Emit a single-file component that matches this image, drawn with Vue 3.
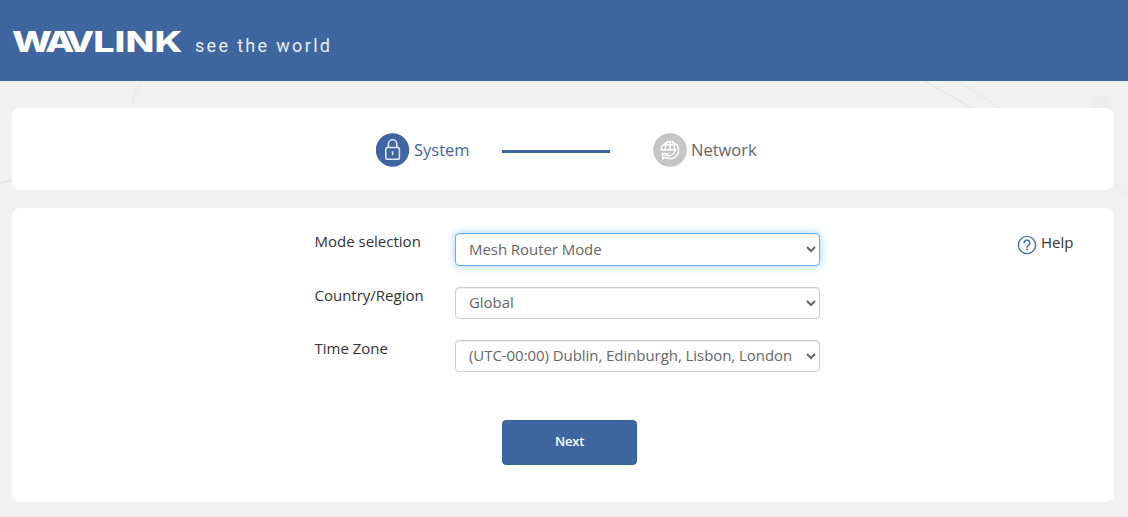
<script setup>
import { ref } from "vue";

const fields = ref([
  {
    id: "mode",
    label: "Mode selection",
    value: "Mesh Router Mode",
    options: ["Mesh Router Mode", "AP Mode", "Repeater Mode"],
  },
  {
    id: "region",
    label: "Country/Region",
    value: "Global",
    options: ["Global"],
  },
  {
    id: "timezone",
    label: "Time Zone",
    value: "(UTC-00:00) Dublin, Edinburgh, Lisbon, London",
    options: ["(UTC-00:00) Dublin, Edinburgh, Lisbon, London"],
  },
]);

const active = ref("mode");
</script>

<template>
  <div class="page">
    <svg class="backdrop" width="1128" height="517" viewBox="0 0 1128 517">
      <g fill="none" stroke="#e1e1e1">
        <path d="M924 81l50 28" />
        <path d="M958 81l43 28M1113 184l15 11" stroke="#e6e6e6" />
        <path d="M1112 181l16 9" stroke="#e9e9e9" />
        <path d="M0 183l12-3" stroke="#e5e5e5" stroke-width="2" />
        <path d="M142 81q-7 9-10 22" stroke="#ebebeb" stroke-width="2" />
      </g>
      <path d="M1091 96h20v12h-20z" fill="#ededed" />
    </svg>

    <header class="header">
      <svg class="logo" width="340" height="50" viewBox="0 0 340 50">
        <text class="brand" transform="translate(12 36) scale(1.3 1)" dx="0 -3 -4.5 -1 0 0 0" textLength="131">WAVLINK</text>
        <text class="slogan" x="195" y="36" textLength="135">see the world</text>
      </svg>
    </header>

    <nav class="card steps">
      <div class="step current">
        <svg width="34" height="34" viewBox="0 0 34 34" fill="none">
          <circle cx="16.5" cy="17" r="16.7" fill="#3f66a1" />
          <g stroke="#dfe7f3" stroke-width="1.6">
            <rect x="9.8" y="14.5" width="13.6" height="11.7" rx="1.8" />
            <path d="M12.4 14V11a4.2 4.2 0 0 1 8.4 0v3M16.6 18.2v4" />
          </g>
        </svg>
        <span>System</span>
      </div>
      <div class="line"></div>
      <div class="step">
        <svg width="34" height="34" viewBox="0 0 34 34" fill="none">
          <circle cx="17" cy="17" r="16.8" fill="#c5c5c5" />
          <g stroke="#fff" stroke-width="1.4">
            <path d="M7.8 17.2a9.2 9.2 0 0 1 17.6-3" />
            <path d="M17 7.5v10M7.5 16.8h15M9.5 11.8h15" />
            <path d="M15 7.8q-3 4.2-3 9.5M19 7.8q3 4.2 3 9.5" />
            <path d="M24.5 13.5c4 8-5 15.5-12.6 10.4l-2 2-.6-5.4 5.4.2-1.4 1.4c4.6 2 9-1.5 9-6" />
          </g>
        </svg>
        <span>Network</span>
      </div>
    </nav>

    <main class="card content">
      <form class="form" @submit.prevent>
        <div v-for="field in fields" :key="field.id" class="row">
          <label :for="field.id">{{ field.label }}</label>
          <select
            :id="field.id"
            v-model="field.value"
            :class="{ active: active === field.id }"
            @focus="active = field.id"
          >
            <option v-for="option in field.options" :key="option">
              {{ option }}
            </option>
          </select>
        </div>
        <button class="next">Next</button>
      </form>

      <a class="help">
        <svg width="20" height="20" viewBox="0 0 20 20" fill="none">
          <g stroke="#4a70ab" stroke-width="1.4">
            <circle cx="10" cy="10" r="8.6" />
            <path d="M7.2 8a2.8 2.8 0 1 1 4.3 2.3c-1 .6-1.5 1-1.5 2.2" stroke-width="1.6" />
          </g>
          <circle cx="10" cy="14.6" r="1" fill="#4a70ab" />
        </svg>
        <span>Help</span>
      </a>
    </main>
  </div>
</template>

<style>
body {
  margin: 0;
  overflow: hidden;
}
</style>

<style scoped>
.page {
  position: relative;
  height: 517px;
  background: #f1f1f1;
  color: #333;
  font-family: "Open Sans", "Noto Sans", sans-serif;
  font-size: 15px;
}

.backdrop {
  position: absolute;
  top: 0;
  left: 0;
}

.header {
  position: relative;
  height: 81px;
  background: #3f66a1;
}

.logo {
  display: block;
  padding-top: 16px;
  fill: #fff;
}

.brand {
  font-family: Inter, sans-serif;
  font-size: 29px;
  font-weight: 800;
}

.slogan {
  font-family: Roboto, sans-serif;
  font-size: 18px;
  fill: #e9eef6;
}

.card {
  position: relative;
  box-sizing: border-box;
  width: 1102px;
  margin-left: 12px;
  border-radius: 8px;
  background: #fff;
}

.steps {
  display: flex;
  height: 82px;
  margin-top: 27px;
  padding: 25px 0 0 364px;
}

.step {
  display: flex;
  gap: 4px;
  height: 34px;
  line-height: 34px;
  font-size: 16.5px;
  color: #666;
}

.step.current {
  color: #3f66a1;
}

.step:first-child {
  width: 126px;
}

.line {
  width: 108px;
  height: 3px;
  margin: 17px 43px 0 0;
  background: #3f66a1;
}

.content {
  display: flex;
  height: 294px;
  margin-top: 18px;
}

.form {
  width: 1005px;
  padding: 25px 0 0 302.5px;
  box-sizing: border-box;
}

.row {
  display: flex;
  height: 53.5px;
}

label {
  width: 140.5px;
  line-height: 16px;
}

select {
  box-sizing: border-box;
  width: 365px;
  height: 32px;
  padding: 0 9px 2px;
  border: 1px solid #ccc;
  border-radius: 4px;
  outline: none;
  background: #fff;
  box-shadow: inset 0 1px 1px rgba(0, 0, 0, 0.075);
  color: #666;
  font-family: inherit;
  font-size: 15px;
  letter-spacing: -0.06px;
}

select.active {
  height: 33px;
  border-color: #66afe9;
  box-shadow:
    inset 0 1px 1px rgba(0, 0, 0, 0.075),
    0 0 8px rgba(102, 175, 233, 0.6);
}

.next {
  display: block;
  width: 135px;
  height: 45px;
  margin: 26px 0 0 187.5px;
  padding: 0 0 3px;
  border: 1px solid #386598;
  border-radius: 4px;
  background: #3f66a1;
  color: #fff;
  font-family: inherit;
  font-size: 13px;
  font-weight: 600;
  letter-spacing: -0.2px;
}

.help {
  display: flex;
  gap: 4px;
  padding-top: 25px;
  line-height: 18px;
}

.help svg {
  margin-top: 2px;
}
</style>
